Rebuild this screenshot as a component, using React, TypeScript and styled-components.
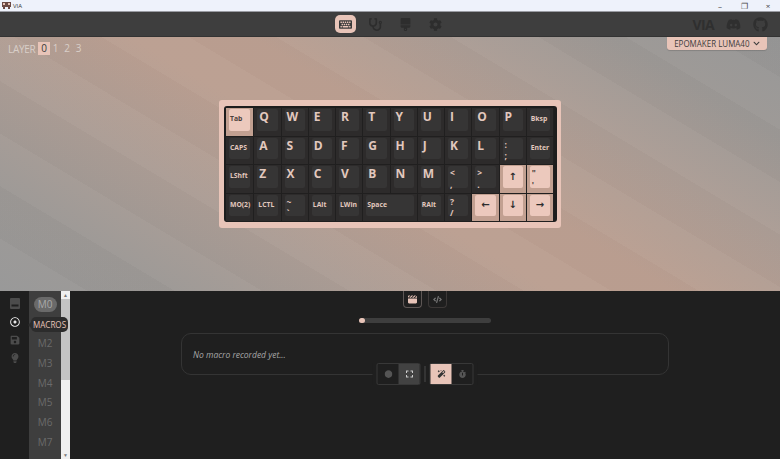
import * as React from "react";
import styled, { createGlobalStyle } from "styled-components";
import {
  FaBrush,
  FaChevronDown,
  FaCircle,
  FaCode,
  FaCog,
  FaDiscord,
  FaExpand,
  FaGithub,
  FaKeyboard,
  FaLightbulb,
  FaMagic,
  FaRegDotCircle,
  FaSave,
  FaStethoscope,
  FaStopwatch,
} from "react-icons/fa";
import { FaClapperboard } from "react-icons/fa6";

const PINK = "#e8c4b8";
const PINK_DARK = "#c2a091";

const GlobalStyle = createGlobalStyle`
  html, body {
    margin: 0;
    height: 100%;
    overflow: hidden;
    background: #1f1f1f;
    font-family: "Open Sans", "Noto Sans", sans-serif;
  }
  * {
    box-sizing: border-box;
  }
`;

const Page = styled.div`
  display: flex;
  flex-direction: column;
  height: 459px;
  width: 780px;
`;

const TitleBar = styled.div`
  flex: 0 0 12px;
  display: flex;
  align-items: center;
  background: #eef2fb;
  border-bottom: 1px solid #9a9ca3;
  color: #333;
  font-size: 6px;
  padding-left: 2px;
`;

const TitleText = styled.span`
  margin-left: 2px;
`;

const WindowControls = styled.div`
  margin-left: auto;
  display: flex;
`;

const WindowButton = styled.span`
  width: 24px;
  text-align: center;
  font-size: 8px;
  line-height: 11px;
  color: #444;
`;

const TopBar = styled.div`
  flex: 0 0 25px;
  position: relative;
  display: flex;
  align-items: center;
  justify-content: center;
  gap: 9px;
  background: #3e3e3e;
  border-bottom: 1px solid #333;
`;

const NavButton = styled.div<{ $active?: boolean }>`
  width: 21px;
  height: 18px;
  display: flex;
  align-items: center;
  justify-content: center;
  border-radius: 5px;
  font-size: 13px;
  background: ${(p) => (p.$active ? PINK : "transparent")};
  color: ${(p) => (p.$active ? "#3a3a3a" : "#2d2d2d")};
`;

const ExternalLinks = styled.div`
  position: absolute;
  right: 12px;
  top: 0;
  bottom: 0;
  display: flex;
  align-items: center;
  gap: 12px;
  color: #2f2f2f;
  font-size: 15px;
`;

const ViaMark = styled.span`
  font-size: 14px;
  font-weight: 700;
  letter-spacing: -0.6px;
`;

const Hero = styled.div`
  flex: 0 0 254px;
  position: relative;
  display: flex;
  align-items: center;
  justify-content: center;
  background:
    repeating-linear-gradient(31deg, rgba(255, 255, 255, 0.018) 0 45px, rgba(0, 0, 0, 0.012) 45px 90px),
    linear-gradient(31deg, #979797 0%, #9c9895 14%, #ac9d95 30%, #bb9f91 46%, #bb9f91 56%, #ac9d95 72%, #9c9895 86%, #969696 100%);
`;

const LayerPicker = styled.div`
  position: absolute;
  left: 8px;
  top: 5px;
  display: flex;
  align-items: center;
  height: 13px;
  font-size: 10px;
  color: #d9cfc9;
`;

const LayerLabel = styled.span`
  margin-right: 3px;
  letter-spacing: -0.3px;
`;

const LayerNumber = styled.span<{ $active?: boolean }>`
  width: 11.5px;
  height: 13px;
  line-height: 13px;
  text-align: center;
  background: ${(p) => (p.$active ? PINK : "transparent")};
  color: ${(p) => (p.$active ? "#3a3a3a" : "#d9cfc9")};
`;

const BoardSelect = styled.div`
  position: absolute;
  right: 13px;
  top: 0;
  width: 100px;
  height: 13px;
  display: flex;
  align-items: center;
  justify-content: center;
  gap: 3px;
  background: ${PINK};
  color: #3c3c3c;
  font-size: 9.5px;
  white-space: nowrap;
  border-radius: 0 0 3px 3px;
  box-shadow: 0 1px 1px rgba(0, 0, 0, 0.15);
`;

const BoardName = styled.span`
  display: inline-block;
  margin: 0 -7px;
  transform: scaleX(0.84);
`;

const KeyboardCase = styled.div`
  background: ${PINK};
  border-radius: 3px;
  padding: 6px 4px 6px 5px;
`;

const Plate = styled.div`
  width: 333px;
  padding: 2px 3px 0 2px;
  display: grid;
  grid-template-columns: repeat(12, 1fr);
  grid-auto-rows: 28.5px;
  background: #1d1d1d;
  border-radius: 3px;
`;

const Key = styled.div<{ $accent?: boolean; $span?: number }>`
  grid-column: span ${(p) => p.$span ?? 1};
  display: flex;
  padding: 1px 3px 5px;
  background: ${(p) => (p.$accent ? PINK_DARK : "#2d2b2b")};
  border-right: 1px solid #201f1f;
  border-bottom: 1px solid #201f1f;
`;

const Cap = styled.div<{ $accent?: boolean; $small?: boolean }>`
  flex: 1;
  min-width: 0;
  display: flex;
  flex-direction: column;
  justify-content: ${(p) => (p.$small ? "center" : "flex-start")};
  padding: ${(p) => (p.$small ? "0" : "1px 0 0 2px")};
  border-radius: 2px;
  background: ${(p) => (p.$accent ? "#ecc9bd" : "#363535")};
  color: ${(p) => (p.$accent ? "#4a403b" : "#e2c8be")};
  line-height: 1;
`;

const Letter = styled.span`
  font-size: 12px;
  font-weight: 700;
  line-height: 14px;
`;

const SmallLegend = styled.span`
  font-size: 6.8px;
  font-weight: 700;
  padding-left: 1px;
  white-space: nowrap;
`;

const ArrowLegend = styled.span`
  font-family: "DejaVu Sans", sans-serif;
  font-size: 10px;
  font-weight: 700;
  text-align: center;
  color: #2d2d2d;
`;

const TwoLine = styled.span`
  display: flex;
  flex-direction: column;
  font-size: 8.5px;
  font-weight: 700;
  line-height: 11.6px;
`;

const Panel = styled.div`
  flex: 1;
  display: flex;
  min-height: 0;
  background: #1f1f1f;
`;

const SideIcons = styled.div`
  flex: 0 0 29px;
  display: flex;
  flex-direction: column;
  align-items: center;
  gap: 7px;
  padding-top: 7px;
  font-size: 10px;
`;

const SideIcon = styled.div<{ $active?: boolean }>`
  height: 11px;
  display: flex;
  align-items: center;
  justify-content: center;
  color: ${(p) => (p.$active ? "#e8e8e8" : "#4c4c4c")};
`;

const ListColumn = styled.div`
  flex: 0 0 32px;
  display: flex;
  flex-direction: column;
  align-items: center;
  padding-top: 6px;
  background: #3e3e3e;
`;

const MacroItem = styled.div<{ $active?: boolean }>`
  position: relative;
  height: 15px;
  min-width: 23px;
  margin-bottom: 4.7px;
  padding: 0 4px;
  text-align: center;
  line-height: 15px;
  font-size: 10px;
  border-radius: 8px;
  background: ${(p) => (p.$active ? "#6a6a6a" : "transparent")};
  color: ${(p) => (p.$active ? "#a9a9a9" : "#6b6b6b")};
`;

const MacrosTooltip = styled.div`
  position: absolute;
  left: -3px;
  top: 0;
  z-index: 2;
  width: 37px;
  height: 15px;
  display: flex;
  align-items: center;
  justify-content: center;
  font-size: 9.5px;
  color: ${PINK};
  background: #2c2c2c;
  border-radius: 5px;

  &::before {
    content: "";
    position: absolute;
    left: -3px;
    top: 5px;
    border-top: 3px solid transparent;
    border-bottom: 3px solid transparent;
    border-right: 3px solid #2c2c2c;
  }
`;

const TooltipText = styled.span`
  display: inline-block;
  transform: scaleX(0.85);
`;

const Scrollbar = styled.div`
  flex: 0 0 9px;
  display: flex;
  flex-direction: column;
  background: #f0f0f0;
`;

const ScrollArrow = styled.div`
  height: 8px;
  font-size: 5px;
  line-height: 8px;
  text-align: center;
  color: #777;
`;

const ScrollThumb = styled.div`
  height: 81px;
  background: #c4c4c4;
`;

const ScrollTrack = styled.div`
  flex: 1;
`;

const MacroPane = styled.div`
  flex: 1;
  display: flex;
  flex-direction: column;
  align-items: center;
`;

const ModeTabs = styled.div`
  display: flex;
  gap: 6px;
  height: 17px;
`;

const ModeTab = styled.div<{ $active?: boolean }>`
  width: 19px;
  display: flex;
  align-items: center;
  justify-content: center;
  font-size: 9px;
  border: 1px solid ${(p) => (p.$active ? "#5e5755" : "#3c3837")};
  border-top: none;
  border-radius: 0 0 4px 4px;
  color: ${(p) => (p.$active ? PINK : "#777")};
`;

const Progress = styled.div`
  width: 132px;
  height: 5px;
  margin-top: 10px;
  border-radius: 3px;
  background: #3e3e3e;
`;

const ProgressFill = styled.div`
  height: 100%;
  border-radius: 3px;
  background: ${PINK};
`;

const MacroCard = styled.div`
  position: relative;
  width: 488px;
  height: 42px;
  margin-top: 10px;
  padding-left: 11px;
  display: flex;
  align-items: center;
  border: 1px solid #343434;
  border-radius: 10px;
  font-size: 8.5px;
  font-style: italic;
  color: #a8a8a8;
`;

const Toolbar = styled.div`
  position: absolute;
  left: 50%;
  bottom: -11px;
  transform: translateX(-50%);
  display: flex;
  align-items: center;
  gap: 4px;
  padding: 0 4px;
  background: #1f1f1f;
`;

const ToolGroup = styled.div`
  display: flex;
  border: 1px solid #383838;
  border-radius: 2px;
`;

const ToolButton = styled.div<{ $state?: "hover" | "active" }>`
  width: 21px;
  height: 20px;
  display: flex;
  align-items: center;
  justify-content: center;
  font-size: 8px;
  background: ${(p) =>
    p.$state === "active" ? PINK : p.$state === "hover" ? "#424242" : "transparent"};
  color: ${(p) =>
    p.$state === "active" ? "#333" : p.$state === "hover" ? "#ccc" : "#555"};
`;

const ToolDivider = styled.div`
  width: 1px;
  height: 16px;
  background: #4a4a4a;
`;

const KeySwitchIcon = () => (
  <svg width="10" height="11" viewBox="0 0 10 11" fill="currentColor">
    <path d="M1 0h8a1 1 0 0 1 1 1v9a1 1 0 0 1-1 1H1a1 1 0 0 1-1-1V1a1 1 0 0 1 1-1zm.5 6.5v2h7v-2z" fillRule="evenodd" />
  </svg>
);

const ViaAppIcon = () => (
  <svg width="9" height="7" viewBox="0 0 9 7">
    <rect width="9" height="5" fill="#6b4a44" />
    <rect x="1" y="1" width="2" height="2" fill="#e8c4b8" />
    <rect x="6" y="1" width="2" height="2" fill="#e8c4b8" />
    <rect x="1" y="5" width="2" height="2" fill="#6b4a44" />
    <rect x="6" y="5" width="2" height="2" fill="#6b4a44" />
  </svg>
);

type KeyDef = {
  label: string;
  alt?: string;
  kind?: "letter" | "small" | "arrow" | "two";
  accent?: boolean;
  span?: number;
};

const letters = (s: string): KeyDef[] => s.split("").map((label) => ({ label }));
const small = (label: string, accent = false, span = 1): KeyDef => ({ label, kind: "small", accent, span });
const two = (label: string, alt: string, accent = false): KeyDef => ({ label, alt, kind: "two", accent });
const arrow = (label: string): KeyDef => ({ label, kind: "arrow", accent: true });

const KEYS: KeyDef[] = [
  small("Tab", true),
  ...letters("QWERTYUIOP"),
  small("Bksp"),
  small("CAPS"),
  ...letters("ASDFGHJKL"),
  two(":", ";"),
  small("Enter"),
  small("LShft"),
  ...letters("ZXCVBNM"),
  two("<", ","),
  two(">", "."),
  arrow("↑"),
  two('"', "'", true),
  small("MO(2)"),
  small("LCTL"),
  two("~", "`"),
  small("LAlt"),
  small("LWin"),
  small("Space", false, 2),
  small("RAlt"),
  two("?", "/"),
  arrow("←"),
  arrow("↓"),
  arrow("→"),
];

const MACROS = ["M2", "M3", "M4", "M5", "M6", "M7"];

const KeyCap = ({ def }: { def: KeyDef }) => {
  const kind = def.kind ?? "letter";
  return (
    <Key $accent={def.accent} $span={def.span}>
      <Cap $accent={def.accent} $small={kind === "small" || kind === "arrow"}>
        {kind === "letter" && <Letter>{def.label}</Letter>}
        {kind === "small" && <SmallLegend>{def.label}</SmallLegend>}
        {kind === "arrow" && <ArrowLegend>{def.label}</ArrowLegend>}
        {kind === "two" && (
          <TwoLine>
            <span>{def.label}</span>
            <span>{def.alt}</span>
          </TwoLine>
        )}
      </Cap>
    </Key>
  );
};

export default function App() {
  return (
    <Page>
      <GlobalStyle />
      <TitleBar>
        <ViaAppIcon />
        <TitleText>VIA</TitleText>
        <WindowControls>
          <WindowButton>–</WindowButton>
          <WindowButton>❐</WindowButton>
          <WindowButton>×</WindowButton>
        </WindowControls>
      </TitleBar>
      <TopBar>
        <NavButton $active>
          <FaKeyboard />
        </NavButton>
        <NavButton>
          <FaStethoscope />
        </NavButton>
        <NavButton>
          <FaBrush />
        </NavButton>
        <NavButton>
          <FaCog />
        </NavButton>
        <ExternalLinks>
          <ViaMark>VIA</ViaMark>
          <FaDiscord />
          <FaGithub />
        </ExternalLinks>
      </TopBar>
      <Hero>
        <LayerPicker>
          <LayerLabel>LAYER</LayerLabel>
          <LayerNumber $active>0</LayerNumber>
          <LayerNumber>1</LayerNumber>
          <LayerNumber>2</LayerNumber>
          <LayerNumber>3</LayerNumber>
        </LayerPicker>
        <BoardSelect>
          <BoardName>EPOMAKER LUMA40</BoardName>
          <FaChevronDown size={7} />
        </BoardSelect>
        <KeyboardCase>
          <Plate>
            {KEYS.map((def, i) => (
              <KeyCap key={i} def={def} />
            ))}
          </Plate>
        </KeyboardCase>
      </Hero>
      <Panel>
        <SideIcons>
          <SideIcon>
            <KeySwitchIcon />
          </SideIcon>
          <SideIcon $active>
            <FaRegDotCircle />
          </SideIcon>
          <SideIcon>
            <FaSave />
          </SideIcon>
          <SideIcon>
            <FaLightbulb />
          </SideIcon>
        </SideIcons>
        <ListColumn>
          <MacroItem $active>M0</MacroItem>
          <MacroItem>
            <MacrosTooltip>
              <TooltipText>MACROS</TooltipText>
            </MacrosTooltip>
          </MacroItem>
          {MACROS.map((m) => (
            <MacroItem key={m}>{m}</MacroItem>
          ))}
        </ListColumn>
        <Scrollbar>
          <ScrollArrow>▲</ScrollArrow>
          <ScrollThumb />
          <ScrollTrack />
          <ScrollArrow>▼</ScrollArrow>
        </Scrollbar>
        <MacroPane>
          <ModeTabs>
            <ModeTab $active>
              <FaClapperboard />
            </ModeTab>
            <ModeTab>
              <FaCode />
            </ModeTab>
          </ModeTabs>
          <Progress>
            <ProgressFill style={{ width: `${(6 / 132) * 100}%` }} />
          </Progress>
          <MacroCard>
            No macro recorded yet...
            <Toolbar>
              <ToolGroup>
                <ToolButton>
                  <FaCircle />
                </ToolButton>
                <ToolButton $state="hover">
                  <FaExpand />
                </ToolButton>
              </ToolGroup>
              <ToolDivider />
              <ToolGroup>
                <ToolButton $state="active">
                  <FaMagic />
                </ToolButton>
                <ToolButton>
                  <FaStopwatch />
                </ToolButton>
              </ToolGroup>
            </Toolbar>
          </MacroCard>
        </MacroPane>
      </Panel>
    </Page>
  );
}
